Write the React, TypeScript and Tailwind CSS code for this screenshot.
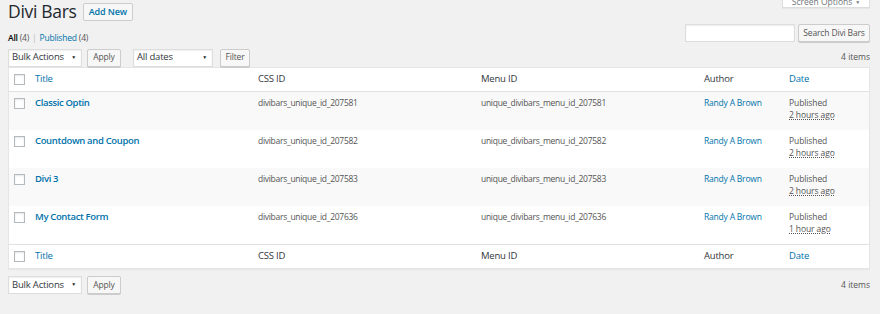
import React from "react";

const rows = [
  { title: "Classic Optin", css: "divibars_unique_id_207581", menu: "unique_divibars_menu_id_207581", date: "2 hours ago" },
  { title: "Countdown and Coupon", css: "divibars_unique_id_207582", menu: "unique_divibars_menu_id_207582", date: "2 hours ago" },
  { title: "Divi 3", css: "divibars_unique_id_207583", menu: "unique_divibars_menu_id_207583", date: "2 hours ago" },
  { title: "My Contact Form", css: "divibars_unique_id_207636", menu: "unique_divibars_menu_id_207636", date: "1 hour ago" },
];

const grid = "grid grid-cols-[26px_223px_223px_223px_85px_1fr]";

function Checkbox() {
  return <div className="w-[11px] h-[11px] border border-[#b4b9be] bg-white shadow-[inset_0_1px_2px_rgba(0,0,0,0.1)]" />;
}

function Select({ label, w }: { label: string; w: string }) {
  return (
    <div className={`${w} h-[18px] bg-white border border-[#ddd] shadow-[inset_0_1px_2px_rgba(0,0,0,0.07)] flex items-center justify-between pl-[3px] pr-[5px] text-[9.5px] tracking-[-0.2px] text-[#32373c]`}>
      <span>{label}</span>
      <span className="text-[5px] text-[#23282d]">▼</span>
    </div>
  );
}

function Button({ label, w }: { label: string; w: string }) {
  return (
    <div className={`${w} h-[18px] bg-[#f7f7f7] border border-[#ccc] rounded-[2px] shadow-[0_1px_0_#ccc] flex items-center justify-center text-[8.5px] tracking-[-0.15px] text-[#555]`}>
      {label}
    </div>
  );
}

function HeaderRow({ top }: { top?: boolean }) {
  return (
    <div className={`${grid} h-[24px] items-center text-[9.5px] tracking-[-0.2px] ${top ? "border-b border-[#e1e1e1]" : "border-t border-[#e1e1e1]"}`}>
      <div className="pl-[5px]"><Checkbox /></div>
      <div className="text-[#0073aa]">Title</div>
      <div className="text-[#32373c]">CSS ID</div>
      <div className="text-[#32373c]">Menu ID</div>
      <div className="text-[#32373c]">Author</div>
      <div className="text-[#0073aa]">Date</div>
    </div>
  );
}

export default function App() {
  return (
    <div className="w-[880px] h-[314px] bg-[#f1f1f1] relative overflow-hidden text-[#444]" style={{ fontFamily: '"Open Sans", "Noto Sans", sans-serif' }}>
      <div className="absolute top-[-8px] right-[10px] w-[88px] h-[16px] bg-white border border-[#ddd] shadow-[0_1px_1px_rgba(0,0,0,0.04)] flex items-end justify-center text-[8.5px] leading-[10px] text-[#72777c]">
        Screen Options <span className="ml-[3px] text-[5px] leading-[10px]">▼</span>
      </div>

      <div className="pl-[8px] pr-[10px]">
        <div className="flex items-center h-[24px]">
          <div className="text-[17.5px] text-[#23282d] leading-none tracking-[-0.3px]">Divi Bars</div>
          <div className="ml-[6px] h-[18px] px-[5px] border border-[#ccc] bg-[#f7f7f7] rounded-[2px] flex items-center text-[9px] font-semibold tracking-[-0.1px] text-[#0073aa]">Add New</div>
        </div>

        <div className="flex justify-between items-end h-[18px]">
          <div className="text-[8.5px] leading-none pb-[0px] tracking-[-0.2px]">
            <span className="font-semibold text-black">All</span> <span className="text-[#555]">(4)</span>
            <span className="text-[#bbb] mx-[3px]">|</span>
            <span className="text-[#0073aa]">Published</span> <span className="text-[#555]">(4)</span>
          </div>
          <div className="flex items-center gap-[3px]">
            <div className="w-[110px] h-[18px] bg-white border border-[#ddd] shadow-[inset_0_1px_2px_rgba(0,0,0,0.07)]" />
            <Button label="Search Divi Bars" w="w-[72px]" />
          </div>
        </div>

        <div className="flex items-center justify-between h-[25px] pt-[6px]">
          <div className="flex items-center">
            <Select label="Bulk Actions" w="w-[74px]" />
            <div className="ml-[5px]"><Button label="Apply" w="w-[34px]" /></div>
            <div className="ml-[12px]"><Select label="All dates" w="w-[80px]" /></div>
            <div className="ml-[7px]"><Button label="Filter" w="w-[30px]" /></div>
          </div>
          <div className="text-[8.5px] text-[#555]">4 items</div>
        </div>

        <div className="bg-white border border-[#e5e5e5] shadow-[0_1px_1px_rgba(0,0,0,0.04)]">
          <HeaderRow top />
          {rows.map((r, i) => (
            <div key={r.title} className={`${grid} h-[38px] pt-[5px] ${i % 2 === 0 ? "bg-[#f9f9f9]" : "bg-white"}`}>
              <div className="pl-[5px] pt-[1px]"><Checkbox /></div>
              <div className="text-[9.5px] font-semibold text-[#0073aa] leading-[12px] tracking-[-0.35px]">{r.title}</div>
              <div className="text-[8.5px] text-[#555] leading-[12px] tracking-[-0.28px]">{r.css}</div>
              <div className="text-[8.5px] text-[#555] leading-[12px] tracking-[-0.28px]">{r.menu}</div>
              <div className="text-[8.5px] text-[#0073aa] leading-[12px] tracking-[-0.2px]">Randy A Brown</div>
              <div className="text-[8.5px] text-[#555] leading-[12px] tracking-[-0.1px]">
                <div>Published</div>
                <div className="underline decoration-dotted">{r.date}</div>
              </div>
            </div>
          ))}
          <HeaderRow />
        </div>

        <div className="flex items-center justify-between mt-[7px]">
          <div className="flex items-center">
            <Select label="Bulk Actions" w="w-[74px]" />
            <div className="ml-[5px]"><Button label="Apply" w="w-[34px]" /></div>
          </div>
          <div className="text-[8.5px] text-[#555]">4 items</div>
        </div>
      </div>
    </div>
  );
}
